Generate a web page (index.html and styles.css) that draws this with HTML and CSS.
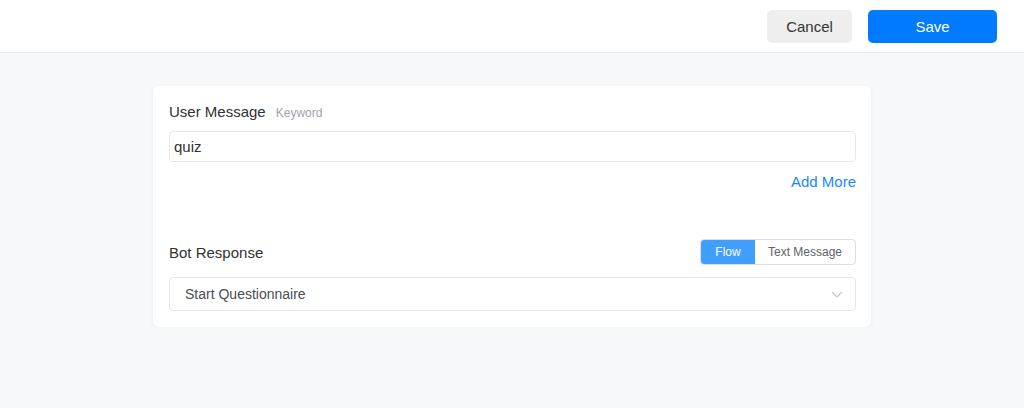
FILE: index.html
```html
<!DOCTYPE html>
<html lang="en">

<head>
  <meta charset="UTF-8">
  <meta name="viewport" content="width=device-width, initial-scale=1.0">
  <title>Edit Reply</title>
  <link rel="stylesheet" href="styles.css">
</head>

<body>
  <header class="topbar">
    <button class="btn btn-cancel">Cancel</button>
    <button class="btn btn-save">Save</button>
  </header>

  <main class="page">
    <section class="card">
      <div class="label-row">
        <span class="label">User Message</span>
        <span class="hint">Keyword</span>
      </div>
      <div class="input">quiz</div>
      <div class="add-row">
        <a href="#" class="add-more">Add More</a>
      </div>

      <div class="bot-row">
        <span class="label">Bot Response</span>
        <div class="toggle">
          <span class="toggle-item active">Flow</span>
          <span class="toggle-item">Text Message</span>
        </div>
      </div>
      <div class="select">
        <span>Start Questionnaire</span>
        <svg class="chevron" width="12" height="12" viewBox="0 0 12 12">
          <path d="M1 4 L6 9 L11 4" fill="none" stroke="#c0c4cc" stroke-width="1.1" />
        </svg>
      </div>
    </section>
  </main>
</body>

</html>
```

FILE: styles.css
```css
body {
  font-family: "Liberation Sans", Arial, sans-serif;
  margin: 0;
  padding: 0;
  background-color: #f7f8fa;
  color: #303133;
}

.topbar {
  height: 53px;
  background-color: #fff;
  border-bottom: 1px solid #e9ebef;
  display: flex;
  align-items: flex-start;
  justify-content: flex-end;
  gap: 16px;
  padding: 10px 27px 0 0;
  box-sizing: border-box;
}

.btn {
  border: none;
  border-radius: 5px;
  font-family: inherit;
  font-size: 15px;
  height: 33px;
  cursor: pointer;
}

.btn-cancel {
  width: 85px;
  background-color: #eeeeee;
  color: #333;
}

.btn-save {
  width: 129px;
  background-color: #007bff;
  color: #fff;
}

.page {
  padding-top: 33px;
  display: flex;
  justify-content: center;
}

.card {
  width: 718px;
  background-color: #fff;
  border-radius: 6px;
  box-shadow: 0 1px 4px rgba(0, 0, 0, 0.06);
  padding: 17px 15px 16px 16px;
  box-sizing: border-box;
}

.label-row {
  display: flex;
  align-items: baseline;
  gap: 10px;
  height: 20px;
}

.label {
  font-size: 15px;
  color: #303133;
}

.hint {
  font-size: 12px;
  color: #a0a4ab;
}

.input {
  margin-top: 8px;
  height: 31px;
  border: 1px solid #e4e7ed;
  border-radius: 4px;
  box-sizing: border-box;
  padding: 0 4px;
  font-size: 15px;
  line-height: 29px;
  color: #303133;
}

.add-row {
  display: flex;
  justify-content: flex-end;
  margin-top: 11px;
}

.add-more {
  font-size: 15px;
  color: #1e88f5;
  text-decoration: none;
}

.bot-row {
  display: flex;
  justify-content: space-between;
  align-items: center;
  margin-top: 49px;
}

.toggle {
  display: flex;
  border: 1px solid #dcdfe6;
  border-radius: 4px;
  overflow: hidden;
  height: 26px;
  box-sizing: border-box;
}

.toggle-item {
  font-size: 12px;
  line-height: 24px;
  color: #606266;
  width: 100px;
  text-align: center;
}

.toggle-item.active {
  background-color: #409eff;
  color: #fff;
  width: 54px;
}

.select {
  margin-top: 12px;
  height: 34px;
  border: 1px solid #e4e7ed;
  border-radius: 4px;
  box-sizing: border-box;
  display: flex;
  align-items: center;
  justify-content: space-between;
  padding: 0 12px 0 15px;
  font-size: 14px;
  color: #4a4d52;
}
```
